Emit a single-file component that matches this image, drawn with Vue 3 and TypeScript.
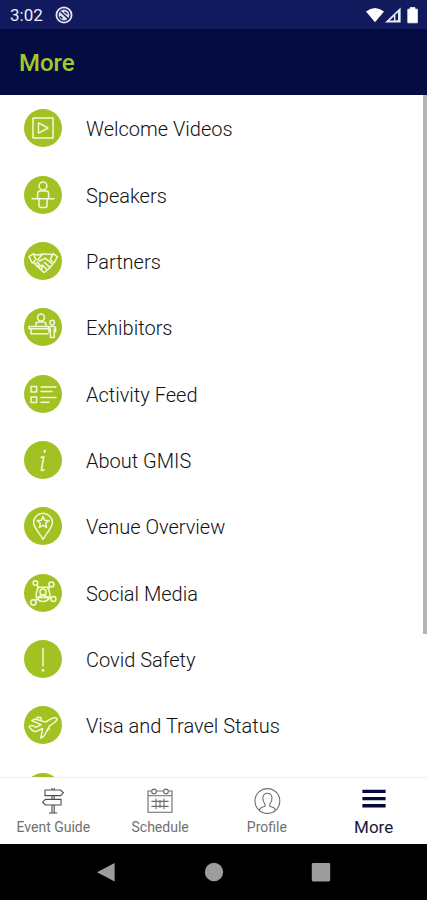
<script setup lang="ts">
interface MenuItem {
  label: string
  icon: string
}

interface Tab {
  label: string
  icon: string
  active?: boolean
}

const items: MenuItem[] = [
  { label: 'Welcome Videos', icon: 'video' },
  { label: 'Speakers', icon: 'speaker' },
  { label: 'Partners', icon: 'handshake' },
  { label: 'Exhibitors', icon: 'booth' },
  { label: 'Activity Feed', icon: 'feed' },
  { label: 'About GMIS', icon: 'info' },
  { label: 'Venue Overview', icon: 'pin' },
  { label: 'Social Media', icon: 'social' },
  { label: 'Covid Safety', icon: 'alert' },
  { label: 'Visa and Travel Status', icon: 'plane' },
]

const tabs: Tab[] = [
  { label: 'Event Guide', icon: 'signpost' },
  { label: 'Schedule', icon: 'calendar' },
  { label: 'Profile', icon: 'profile' },
  { label: 'More', icon: 'menu', active: true },
]
</script>

<template>
  <div class="screen">
    <div class="status">
      <span class="clock">3:02</span>
      <svg class="status-app" viewBox="0 0 18 18" aria-hidden="true">
        <circle cx="9" cy="9" r="7.6" fill="none" stroke="#e4e6f3" stroke-width="1.8" />
        <circle cx="9" cy="9" r="5.4" fill="#dfe1f0" />
        <path d="M5.4 5.6L13.2 12.8M9.4 5.8L12.6 8.2M5 10.2L7.4 12.6" stroke="#111a5c" stroke-width="1.4" />
      </svg>
      <svg class="status-icons" viewBox="0 0 54 18" aria-hidden="true">
        <path d="M1 5.6Q10 -1.8 19 5.6L10 16.2Z" fill="#fff" />
        <path d="M20 16.6L35.6 1.4V16.6Z" fill="#e8eaf6" />
        <path d="M24.6 14.6L29 10.4V14.6ZM30.4 14.2V8.6L33 6.4V14.2Z" fill="#111a5c" />
        <path d="M42.8 3.2H45.2V1.6H50V3.2H52.4V16.8H42.8Z" fill="#fff" stroke="#fff" stroke-width="0.8" stroke-linejoin="round" />
      </svg>
    </div>

    <header class="bar">
      <h1>More</h1>
    </header>

    <main class="content">
      <ul class="list">
        <li v-for="item in items" :key="item.label">
          <a class="row" href="#">
            <svg class="badge" viewBox="0 0 38 38" aria-hidden="true">
              <circle class="disc" cx="19" cy="19" r="19" />
              <g v-if="item.icon === 'video'" class="ink">
                <rect x="9" y="9" width="20" height="20" />
                <path d="M14.5 13.8V24.2L24 19Z" />
              </g>
              <g v-else-if="item.icon === 'speaker'" class="ink">
                <circle cx="19" cy="10" r="3.9" />
                <path d="M13.6 22.4V17.4Q13.6 14.9 16 14.9H22.2Q24.6 14.9 24.6 17.4V22.4" />
                <path d="M8 22.8H30M15 22.8V29.4Q15 31.4 17 31.4H21Q23 31.4 23 29.4V22.8" />
              </g>
              <g v-else-if="item.icon === 'handshake'" class="ink">
                <path d="M5 14.6L9.4 11.6L12 17.8L8.2 21ZM33.4 14.6L29 11.6L26.2 17.8L30 21Z" />
                <path d="M10.4 12.6Q15 13.4 18.4 12Q23.4 11.8 28 12.6M18.4 12.4L13.8 17.4Q15.4 19.8 18.2 17.8L21 16.2L28.4 22Q28.6 24.4 26 24.2" />
                <path d="M9.4 20.4L19 29.6Q20.8 31.2 22 29L26.2 25.8L20.6 20.6M23 27.8L18.4 23M11.2 22L13.6 20.2L15.4 22.4L13 24.4ZM14.6 25.4L17 23.4L18.6 25.6L16.4 27.4Z" />
              </g>
              <g v-else-if="item.icon === 'booth'" class="ink">
                <circle cx="17" cy="9.6" r="3.5" />
                <path d="M11.8 18V16.4Q12 14 14.4 14H19.4Q21.8 14 22 16.4V18" />
                <path d="M5 18.4H24.6V20.8H5ZM7 20.8V25.8H24" />
                <circle cx="28.2" cy="14.6" r="2.3" />
                <path d="M25 24V20.2Q25 18.4 27 18.4H29.6Q31.6 18.4 31.6 20.2V24M26.4 21V29.6H30.2V21" />
              </g>
              <g v-else-if="item.icon === 'feed'" class="ink">
                <path d="M7 11.4H12.6V17H7ZM7 22H12.6V27.6H7Z" />
                <path d="M17 12H32M17 16.4H28M17 22.6H32M17 27.2H25" />
              </g>
              <g v-else-if="item.icon === 'info'" class="ink">
                <path d="M20.9 9.4L20.5 11" stroke-width="2" />
                <path d="M17 16.4L19.8 15.6L17.4 28.6Q17.2 30.4 20 28.8" stroke-width="1.6" />
              </g>
              <g v-else-if="item.icon === 'pin'" class="ink">
                <path d="M19 32.5C16.2 26.6 9.6 21 9.6 15.6A9.4 9.4 0 0 1 28.4 15.6C28.4 21 21.8 26.6 19 32.5Z" />
                <path d="M19 9.4L20.7 13.2L24.8 13.6L21.7 16.3L22.6 20.4L19 18.3L15.4 20.4L16.3 16.3L13.2 13.6L17.3 13.2Z" />
              </g>
              <g v-else-if="item.icon === 'social'" class="ink">
                <circle cx="11.4" cy="9" r="2.3" />
                <circle cx="27.4" cy="10.4" r="2.5" />
                <circle cx="9.4" cy="28.4" r="2.7" />
                <circle cx="29.4" cy="25" r="2.5" />
                <path d="M14 13.2H24.2L26 20.4Q26 27.4 19 27.4T12 20.4Z" />
                <circle cx="19" cy="18" r="3" />
                <path d="M14.4 25.4V24Q15 21.6 19 21.6T23.6 24V25.4M12.8 11L14.8 14M25.8 12.4L23.6 14.8M11.4 26.4L14 24.6M27 24.2L24.6 23M14 23.4H24.4" />
              </g>
              <g v-else-if="item.icon === 'alert'" class="ink">
                <path d="M19 8.4V26" />
                <circle cx="19" cy="30.4" r="0.7" />
              </g>
              <g v-else class="ink">
                <path d="M5 20.4L8 19.4L12.2 21.2L17 18.8L7.8 14.6L10.8 13L21.6 16L27.4 12.6Q31.6 11 33 12.6Q33.4 14.4 29.8 17L25.6 19.8L20 30L16.8 32L18.6 22.4L12.6 25.4Q8.6 26.6 5 20.4Z" />
                <path d="M12.4 13.2L13.2 11.2L16.8 11.6L17.4 14.2M22.8 24.8L25.4 22.4" />
              </g>
            </svg>
            <span>{{ item.label }}</span>
          </a>
        </li>
        <li class="row">
          <svg class="badge" viewBox="0 0 38 38" aria-hidden="true">
            <circle class="disc" cx="19" cy="19" r="19" />
          </svg>
        </li>
      </ul>
      <div class="thumb"></div>
    </main>

    <nav class="tabs">
      <a v-for="tab in tabs" :key="tab.label" href="#" class="tab" :class="{ active: tab.active }">
        <svg viewBox="0 0 28 28" aria-hidden="true">
          <g v-if="tab.icon === 'signpost'" class="line post">
            <path d="M6 3H21.6L24.4 5.8L21.6 8.6H6ZM22 12.4H6.4L3.6 15.2L6.4 18H22Z" />
            <path d="M13 1V3M15.2 1V3M13 8.6V12.4M15.2 8.6V12.4M13 18V25.6M15.2 18V25.6M10 26H18.2" />
          </g>
          <g v-else-if="tab.icon === 'calendar'" class="line">
            <path d="M5.4 4H2V25.2H26V4H22.6M10.4 4H17.6M2 8.8H26" />
            <circle cx="8" cy="4.4" r="2.3" />
            <circle cx="20" cy="4.4" r="2.3" />
            <path d="M5.4 14.4H22.6M5.4 19.4H22.6M10 11.6V22.2M18 11.6V22.2M14 13V21" />
          </g>
          <g v-else-if="tab.icon === 'profile'" class="line">
            <circle cx="14.4" cy="14" r="12.4" />
            <path d="M6.4 23.4Q6.8 20.8 9.8 20L12 19.2V17Q9.4 14 9.8 10.4Q10.4 6.2 14.4 6.2T19 10.4Q19.4 14 16.8 17V19.2L19 20Q22 20.8 22.4 23.4" />
          </g>
          <path v-else d="M2.4 4.4H25.6M2.4 11.6H25.6M2.4 18.8H25.6" stroke="#06093f" stroke-width="3.4" />
        </svg>
        <span>{{ tab.label }}</span>
      </a>
    </nav>

    <div class="system">
      <button type="button" aria-label="Back">
        <svg viewBox="0 0 20 20"><path d="M18.6 1V19.6L1 10.2Z" /></svg>
      </button>
      <button type="button" aria-label="Home">
        <svg viewBox="0 0 20 20"><circle cx="10" cy="10" r="9.2" /></svg>
      </button>
      <button type="button" aria-label="Recent apps">
        <svg viewBox="0 0 20 20"><rect x="0.8" y="1" width="18.4" height="18.4" rx="1.4" /></svg>
      </button>
    </div>
  </div>
</template>

<style>
body {
  margin: 0;
}
</style>

<style scoped>
.screen {
  display: flex;
  flex-direction: column;
  height: 100vh;
  overflow: hidden;
  background: #fff;
  color: #111;
  font-family: Roboto, "Liberation Sans", sans-serif;
}

.status {
  display: flex;
  flex: none;
  align-items: center;
  gap: 12px;
  height: 29px;
  padding: 0 8px 0 10px;
  background: #111a5c;
  color: #eceefa;
}

.clock {
  font-size: 17px;
  line-height: 20px;
}

.status-app {
  width: 18px;
  height: 18px;
}

.status-icons {
  width: 54px;
  height: 18px;
  margin-left: auto;
}

.bar {
  display: flex;
  flex: none;
  align-items: center;
  height: 64px;
  padding: 2px 19px 0;
  background: #040c41;
}

h1 {
  margin: 0;
  color: #a4c72f;
  font-size: 24px;
  font-weight: 500;
  line-height: 28px;
}

.content {
  position: relative;
  flex: 1;
  min-height: 0;
  overflow: hidden;
}

.list {
  display: flex;
  flex-direction: column;
  height: 107%;
  margin: 0;
  padding: 0;
  list-style: none;
}

.list > li {
  display: flex;
  flex: 1;
}

.row {
  display: flex;
  flex: 1;
  align-items: center;
  gap: 24px;
  padding: 0 24px;
  color: inherit;
  font-size: 20px;
  font-weight: 300;
  line-height: 24px;
  text-decoration: none;
}

.row span {
  padding-top: 2px;
}

.badge {
  flex: none;
  width: 38px;
  height: 38px;
}

.disc {
  fill: #a2c122;
}

.ink {
  fill: none;
  stroke: #f4f9d8;
  stroke-width: 1.5;
  stroke-linecap: round;
  stroke-linejoin: round;
}

.thumb {
  position: absolute;
  top: 0;
  right: 0;
  width: 4px;
  height: 79%;
  background: #b4b4b4;
}

.tabs {
  display: grid;
  flex: none;
  grid-template-columns: repeat(4, 1fr);
  height: 66px;
  border-top: 1px solid #f0f0f0;
}

.tab {
  display: flex;
  flex-direction: column;
  align-items: center;
  gap: 2px;
  padding-top: 9px;
  color: #707070;
  font-size: 14px;
  line-height: 20px;
  text-decoration: none;
}

.tab svg {
  width: 28px;
  height: 28px;
}

.tab.active {
  color: #17173f;
  font-size: 17px;
}

.line {
  fill: none;
  stroke: #6c6c6c;
  stroke-width: 1.1;
}

.post {
  stroke: #4c4c4c;
}

.system {
  display: flex;
  flex: none;
  justify-content: space-evenly;
  align-items: center;
  height: 56px;
  padding: 0 9px;
  background: #000;
}

.system button {
  display: flex;
  padding: 0;
  border: 0;
  background: none;
}

.system svg {
  width: 20px;
  height: 20px;
  fill: #9c9c9c;
}
</style>
